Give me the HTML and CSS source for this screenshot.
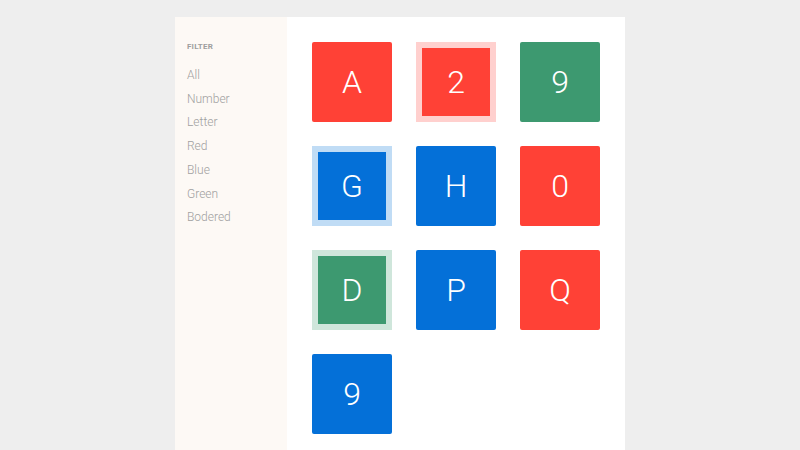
FILE: index.html
```html
<!DOCTYPE html>
<html>
<head>
<meta charset="utf-8">
<link rel="stylesheet" href="styles.css">
</head>
<body>
<div class="card">
  <aside class="sidebar">
    <div class="filter-title">FILTER</div>
    <ul class="filter-list">
      <li>All</li>
      <li>Number</li>
      <li>Letter</li>
      <li>Red</li>
      <li>Blue</li>
      <li>Green</li>
      <li>Bodered</li>
    </ul>
  </aside>
  <main class="grid">
    <div class="tile red">A</div>
    <div class="tile red bordered">2</div>
    <div class="tile green">9</div>
    <div class="tile blue bordered">G</div>
    <div class="tile blue">H</div>
    <div class="tile red">0</div>
    <div class="tile green bordered">D</div>
    <div class="tile blue">P</div>
    <div class="tile red">Q</div>
    <div class="tile blue">9</div>
  </main>
</div>
</body>
</html>
```
FILE: styles.css
```css
html, body {
  margin: 0;
  padding: 0;
  background: #eeeeee;
  font-family: Roboto, "Liberation Sans", sans-serif;
}
.card {
  width: 450px;
  margin: 17px auto 0;
  min-height: 480px;
  background: #ffffff;
  display: flex;
  align-items: stretch;
}
.sidebar {
  width: 112px;
  flex: none;
  background: #fdf9f5;
  padding: 24px 12px 0;
  box-sizing: border-box;
}
.filter-title {
  font-size: 8px;
  font-weight: 700;
  line-height: 12px;
  color: #9e9e9e;
  letter-spacing: 0.2px;
  margin-bottom: 11px;
}
.filter-list {
  list-style: none;
  margin: 0;
  padding: 0;
}
.filter-list li {
  font-size: 12px;
  font-weight: 300;
  color: #a0a0a0;
  line-height: 23.7px;
}
.grid {
  padding: 25px;
  display: grid;
  grid-template-columns: repeat(3, 80px);
  grid-auto-rows: 80px;
  gap: 24px;
  align-content: start;
}
.tile {
  border-radius: 2px;
  color: #ffffff;
  font-size: 32px;
  font-weight: 300;
  display: flex;
  align-items: center;
  justify-content: center;
  box-sizing: border-box;
}
.red { background-color: #ff4136; }
.green { background-color: #3d9970; }
.blue { background-color: #0470d8; }
.tile.bordered { border: 6px solid; border-radius: 0; background-clip: padding-box; }
.red.bordered { border-color: #ffd0ce; }
.green.bordered { border-color: #cfe6db; }
.blue.bordered { border-color: #c0dcf5; }
```
